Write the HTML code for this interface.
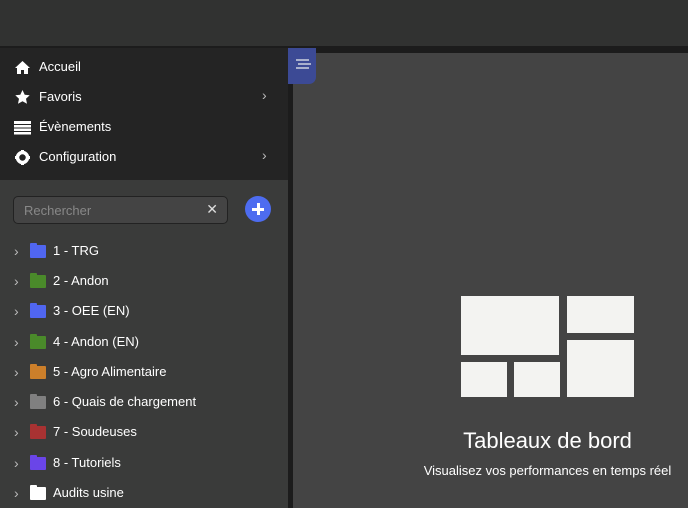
<!DOCTYPE html>
<html><head><meta charset="utf-8"><style>
*{margin:0;padding:0;box-sizing:border-box}
body{width:688px;height:508px;overflow:hidden;background:#444;font-family:"Liberation Sans",sans-serif;position:relative;color:#fff}
.top{position:absolute;left:0;top:0;width:688px;height:46px;background:#313231}
.line{position:absolute;left:0;top:46px;width:688px;height:2px;background:#1c1c1c}
.menu{position:absolute;left:0;top:48px;width:288px;height:132px;background:#242424}
.lower{position:absolute;left:0;top:180px;width:288px;height:328px;background:#3a3b3a}
.vstrip{position:absolute;left:288px;top:48px;width:5px;height:460px;background:#1c1c1c}
.mtop{position:absolute;left:293px;top:48px;width:395px;height:5px;background:#1c1c1c}
.tog{position:absolute;left:288px;top:48px;width:28px;height:36px;background:#3c4a95;border-bottom-right-radius:7px}
.tog i{position:absolute;left:8px;width:13px;height:1.5px;background:#a9b0cc}
.mi{position:absolute;left:14px;height:20px;font-size:13px;line-height:20px;display:flex;align-items:center}
.mi svg{width:17px;height:15px;margin-right:8px}
.chev{position:absolute;left:262px;font-size:14px;color:#bbb}
.search{position:absolute;left:13px;top:196px;width:215px;height:28px;border:1px solid #222;border-radius:5px;background:#444;font-size:13px;color:#888;padding:6px 10px}
.search span{position:absolute;right:9px;top:4px;color:#ddd;font-size:14px}
.plus{position:absolute;left:245px;top:196px;width:26px;height:26px;border-radius:50%;background:#4d6cf0}
.plus:before{content:"";position:absolute;left:7px;top:11.5px;width:12px;height:3px;background:#fff}
.plus:after{content:"";position:absolute;left:11.5px;top:7px;width:3px;height:12px;background:#fff}
.tr{position:absolute;left:14px;height:20px;font-size:13px;line-height:20px;display:flex;align-items:center}
.tr .c{color:#bbb;font-size:14px;width:16px}
.tr .f{width:16px;height:13px;margin-right:7px;position:relative;border-radius:1px}
.tr .f:before{content:"";position:absolute;left:0;top:-2px;width:7px;height:3px;background:inherit;border-radius:1px 1px 0 0}
.r{position:absolute;background:#f3f3f1}
</style></head><body>
<div class="top"></div><div class="line"></div>
<div class="menu"></div><div class="lower"></div>
<div class="vstrip"></div><div class="mtop"></div>
<div class="tog"><i style="top:11px"></i><i style="top:15px;left:10px"></i><i style="top:19px"></i></div>

<div class="mi" style="top:57px"><svg viewBox="0 0 17 15"><path d="M8.5 1L1 8h2v6h4v-4h3v4h4V8h2z" fill="#fff"/></svg>Accueil</div>
<div class="mi" style="top:87px"><svg viewBox="0 0 17 15"><path d="M8.5 0l2.2 4.7 5 .6-3.7 3.4 1 5-4.5-2.5-4.5 2.5 1-5L1.3 5.3l5-.6z" fill="#fff"/></svg>Favoris</div>
<div class="chev" style="top:87px">&#x203A;</div>
<div class="mi" style="top:117px"><svg viewBox="0 0 17 15"><path d="M0 1h17v3H0zM0 5h17v2.5H0zM0 8.5h17V11H0zM0 12h17v2.5H0z" fill="#fff"/></svg>Évènements</div>
<div class="mi" style="top:147px"><svg viewBox="0 0 17 15"><circle cx="8.5" cy="7.5" r="5" fill="none" stroke="#fff" stroke-width="3.5"/><path d="M7 0h3v3H7zM7 12h3v3H7zM1 6h3v3H1zM13 6h3v3h-3z" fill="#fff"/></svg>Configuration</div>
<div class="chev" style="top:147px">&#x203A;</div>

<div class="search">Rechercher<span>✕</span></div>
<div class="plus"></div>

<div class="tr" style="top:241px"><span class="c">&#x203A;</span><span class="f" style="background:#5066f0"></span>1 - TRG</div>
<div class="tr" style="top:271px"><span class="c">&#x203A;</span><span class="f" style="background:#4a8a2a"></span>2 - Andon</div>
<div class="tr" style="top:301px"><span class="c">&#x203A;</span><span class="f" style="background:#5066f0"></span>3 - OEE (EN)</div>
<div class="tr" style="top:332px"><span class="c">&#x203A;</span><span class="f" style="background:#4a8a2a"></span>4 - Andon (EN)</div>
<div class="tr" style="top:362px"><span class="c">&#x203A;</span><span class="f" style="background:#cc7f2a"></span>5 - Agro Alimentaire</div>
<div class="tr" style="top:392px"><span class="c">&#x203A;</span><span class="f" style="background:#808080"></span>6 - Quais de chargement</div>
<div class="tr" style="top:422px"><span class="c">&#x203A;</span><span class="f" style="background:#a83232"></span>7 - Soudeuses</div>
<div class="tr" style="top:453px"><span class="c">&#x203A;</span><span class="f" style="background:#6a45e8"></span>8 - Tutoriels</div>
<div class="tr" style="top:483px"><span class="c">&#x203A;</span><span class="f" style="background:#fff"></span>Audits usine</div>

<div class="r" style="left:461px;top:296px;width:98px;height:59px"></div>
<div class="r" style="left:567px;top:296px;width:67px;height:37px"></div>
<div class="r" style="left:567px;top:340px;width:67px;height:57px"></div>
<div class="r" style="left:461px;top:362px;width:46px;height:35px"></div>
<div class="r" style="left:514px;top:362px;width:46px;height:35px"></div>
<div style="position:absolute;left:410px;width:275px;top:428px;text-align:center;font-size:22px">Tableaux de bord</div>
<div style="position:absolute;left:410px;width:275px;top:463px;text-align:center;font-size:13px">Visualisez vos performances en temps réel</div>
</body></html>
